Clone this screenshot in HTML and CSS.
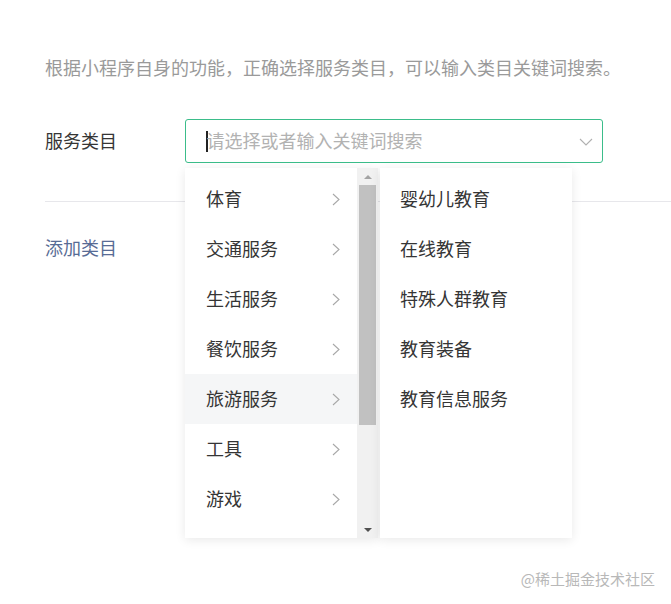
FILE: index.html
```html
<!DOCTYPE html>
<html lang="zh">
<head>
<meta charset="utf-8">
<title>服务类目</title>
<link rel="stylesheet" href="styles.css">
</head>
<body>
<div class="page">
  <p class="desc">根据小程序自身的功能，正确选择服务类目，可以输入类目关键词搜索。</p>
  <div class="row">
    <div class="label">服务类目</div>
    <div class="field">
      <div class="input">
        <span class="caret"></span><span class="placeholder">请选择或者输入关键词搜索</span>
        <svg class="arrow-down" width="14" height="8" viewBox="0 0 14 8"><path d="M1 1 L7 7 L13 1" fill="none" stroke="#b0b0b0" stroke-width="1.1"/></svg>
      </div>
      <div class="dropdown">
        <div class="panel panel-left">
          <ul class="list">
            <li class="item"><span>体育</span><svg class="chev" width="8" height="13" viewBox="0 0 8 13"><path d="M1 1 L7 6.5 L1 12" fill="none" stroke="#a8a8a8" stroke-width="1.1"/></svg></li>
            <li class="item"><span>交通服务</span><svg class="chev" width="8" height="13" viewBox="0 0 8 13"><path d="M1 1 L7 6.5 L1 12" fill="none" stroke="#a8a8a8" stroke-width="1.1"/></svg></li>
            <li class="item"><span>生活服务</span><svg class="chev" width="8" height="13" viewBox="0 0 8 13"><path d="M1 1 L7 6.5 L1 12" fill="none" stroke="#a8a8a8" stroke-width="1.1"/></svg></li>
            <li class="item"><span>餐饮服务</span><svg class="chev" width="8" height="13" viewBox="0 0 8 13"><path d="M1 1 L7 6.5 L1 12" fill="none" stroke="#a8a8a8" stroke-width="1.1"/></svg></li>
            <li class="item hover"><span>旅游服务</span><svg class="chev" width="8" height="13" viewBox="0 0 8 13"><path d="M1 1 L7 6.5 L1 12" fill="none" stroke="#a8a8a8" stroke-width="1.1"/></svg></li>
            <li class="item"><span>工具</span><svg class="chev" width="8" height="13" viewBox="0 0 8 13"><path d="M1 1 L7 6.5 L1 12" fill="none" stroke="#a8a8a8" stroke-width="1.1"/></svg></li>
            <li class="item"><span>游戏</span><svg class="chev" width="8" height="13" viewBox="0 0 8 13"><path d="M1 1 L7 6.5 L1 12" fill="none" stroke="#a8a8a8" stroke-width="1.1"/></svg></li>
          </ul>
          <div class="scrollbar">
            <div class="sb-btn"><span class="tri-up"></span></div>
            <div class="sb-track"><div class="sb-thumb"></div></div>
            <div class="sb-btn"><span class="tri-down"></span></div>
          </div>
        </div>
        <div class="panel panel-right">
          <ul class="list">
            <li class="item sub">婴幼儿教育</li>
            <li class="item sub">在线教育</li>
            <li class="item sub">特殊人群教育</li>
            <li class="item sub">教育装备</li>
            <li class="item sub">教育信息服务</li>
          </ul>
        </div>
      </div>
    </div>
  </div>
  <div class="divider"></div>
  <a class="add">添加类目</a>
</div>
<div class="watermark">@稀土掘金技术社区</div>
</body>
</html>
```

FILE: styles.css
```css
* { box-sizing: border-box; }
html, body {
  margin: 0;
  padding: 0;
  background: #fff;
  width: 671px;
  height: 604px;
  overflow: hidden;
}
body {
  font-family: "Noto Sans CJK SC", "Noto Sans", sans-serif;
  font-size: 18px;
  color: #353535;
  position: relative;
}
.page {
  padding-left: 45px;
  padding-top: 55px;
}
.desc {
  margin: 0;
  line-height: 24px;
  color: #9a9a9a;
  white-space: nowrap;
}
.row {
  display: flex;
  align-items: center;
  margin-top: 40px;
}
.label {
  width: 140px;
  line-height: 24px;
  padding-bottom: 2px;
  color: #353535;
}
.field {
  position: relative;
  width: 418px;
}
.input {
  height: 44px;
  border: 1px solid #3bbd8a;
  border-radius: 3px;
  display: flex;
  align-items: center;
  padding-left: 20px;
  padding-right: 9px;
}
.caret {
  display: inline-block;
  width: 1.5px;
  height: 21px;
  background: #222;
  margin-right: -1px;
}
.placeholder {
  color: #b2b2b2;
  line-height: 24px;
  padding-bottom: 2px;
  flex: 1;
}
.arrow-down {
  display: block;
  margin-top: 1px;
}
.dropdown {
  position: absolute;
  top: 49px;
  left: 0;
  display: flex;
  gap: 2px;
  z-index: 5;
}
.panel {
  background: #fff;
  height: 370px;
  box-shadow: 0 2px 10px rgba(0, 0, 0, 0.09);
}
.panel-left {
  width: 193px;
  display: flex;
}
.panel-right {
  width: 192px;
}
.list {
  list-style: none;
  margin: 0;
  padding: 6px 0 0 0;
  flex: 1;
}
.item {
  height: 50px;
  display: flex;
  align-items: center;
  justify-content: space-between;
  padding-left: 21px;
  padding-right: 17px;
  line-height: 24px;
  color: #353535;
}
.item > span {
  padding-bottom: 2px;
}
.item.hover {
  background: #f5f6f7;
}
.item.sub {
  padding-left: 20px;
  padding-bottom: 2px;
}
.chev {
  display: block;
}
.scrollbar {
  width: 21px;
  background: #f1f1f1;
  display: flex;
  flex-direction: column;
  padding: 0 2px;
}
.sb-btn {
  height: 17px;
  display: flex;
  align-items: center;
  justify-content: center;
}
.tri-up {
  width: 0;
  height: 0;
  border-left: 4px solid transparent;
  border-right: 4px solid transparent;
  border-bottom: 4px solid #a3a3a3;
}
.tri-down {
  width: 0;
  height: 0;
  border-left: 4px solid transparent;
  border-right: 4px solid transparent;
  border-top: 4px solid #505050;
}
.sb-track {
  flex: 1;
}
.sb-thumb {
  height: 240px;
  background: #c1c1c1;
}
.divider {
  height: 1px;
  background: #e7e7eb;
  margin-top: 38px;
}
.add {
  display: block;
  margin-top: 33px;
  padding-bottom: 2px;
  line-height: 24px;
  color: #576b95;
  text-decoration: none;
}
.watermark {
  position: absolute;
  right: 16px;
  top: 568px;
  font-size: 15px;
  line-height: 22px;
  color: #b8b8b8;
}
```
